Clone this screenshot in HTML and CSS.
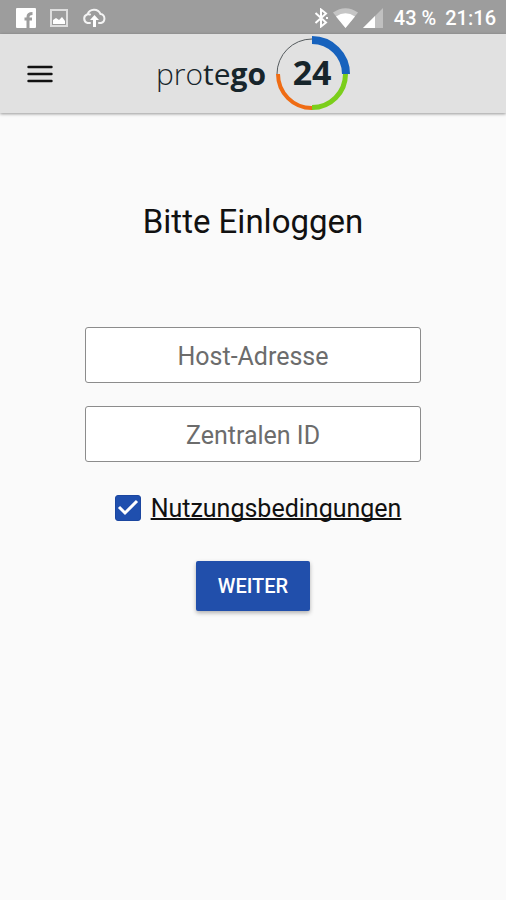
FILE: index.html
```html
<!DOCTYPE html>
<html lang="de">
<head>
<meta charset="utf-8">
<meta name="viewport" content="width=device-width, initial-scale=1">
<title>protego 24</title>
<link rel="stylesheet" href="styles.css">
</head>
<body>
<div class="status-bar">
  <div class="status-group status-notifications">
    <svg width="20" height="20" viewBox="0 0 20 20" aria-hidden="true"><rect width="20" height="20" rx="1" fill="#fff"/><path fill="none" stroke="#9d9d9d" stroke-width="3" d="M12 20V9Q12 5.500 16.500 5.500M8.500 11H16"/></svg>
    <svg width="18" height="18" viewBox="0 0 18 18" aria-hidden="true"><rect x="1" y="1" width="16" height="16" fill="none" stroke="#dedede" stroke-width="2"/><path fill="#fff" d="M3 15v-4l3-2 3 2 3-3 3 4v3z"/></svg>
    <svg width="25" height="20" viewBox="0 0 25 20" aria-hidden="true"><path fill="none" stroke="#f4f4f4" stroke-width="2" stroke-linecap="round" d="M8 15H5.500a4.500 4.500 0 0 1-.5-8.500Q6.500 6 8 6.500M5.500 6.500A7 7 0 0 1 18.500 6a4.600 4.600 0 0 1 .5 9h-2"/><path fill="#fff" d="M12.500 7 17 12h-3v7h-3v-7H8z"/></svg>
  </div>
  <div class="status-group">
    <svg width="14" height="20" viewBox="0 0 14 20" aria-hidden="true"><path fill="none" stroke="#fff" stroke-width="2" d="M1.500 5 12 14.500 7 18.500v-17L12 5.500 1.500 15"/><path fill="#fff" d="M12 9h2v2h-2z"/></svg>
    <svg width="25" height="20" viewBox="0 0 25 20" aria-hidden="true"><path fill="#c5c5c5" d="M0 4.500Q12.500-4 25 4.500L12.500 20z"/><path fill="#fff" d="M3 8.500Q12.500 2 22 8.500L12.500 20z"/></svg>
    <svg width="20" height="20" viewBox="0 0 20 20" aria-hidden="true"><path fill="#c0c0c0" d="M20 0v20H0z"/><path fill="#fff" d="M12 8v12H0z"/></svg>
    <span class="battery">43 %</span>
    <span>21:16</span>
  </div>
</div>
<header class="app-bar">
  <button class="menu-button" type="button" aria-label="Menü">
    <svg width="26" height="18" viewBox="0 0 26 18" aria-hidden="true"><path stroke="#111" stroke-width="2.400" stroke-linecap="round" d="M1.500 2h23M1.500 9h23M1.500 16h23"/></svg>
  </button>
  <div class="brand">
    <span class="brand-name"><span class="thin">pro</span><span class="medium">te</span><span class="bold">go</span></span>
    <div class="ring">
      <svg width="76" height="76" viewBox="0 0 76 76" fill="none" aria-hidden="true">
        <path stroke="#555b5e" d="M3 38A35 35 0 0 1 38 3"/>
        <path stroke="#ef6c14" stroke-width="4" d="M4 38A34 34 0 0 0 38 72"/>
        <path stroke="#7bce1b" stroke-width="5" d="M38 71.500A33.500 33.500 0 0 0 71.500 38"/>
        <path stroke="#1762bd" stroke-width="8" d="M38 4A34 34 0 0 1 72 38"/>
      </svg>
      <span class="ring-number">24</span>
    </div>
  </div>
</header>
<main class="login">
  <h1>Bitte Einloggen</h1>
  <form class="login-form">
    <input class="field" type="text" placeholder="Host-Adresse" aria-label="Host-Adresse">
    <input class="field" type="text" placeholder="Zentralen ID" aria-label="Zentralen ID">
    <div class="terms">
      <span class="check">
        <input type="checkbox" id="terms" aria-labelledby="terms-link" checked>
        <svg class="check-mark" width="26" height="26" viewBox="0 0 26 26" aria-hidden="true"><path fill="none" stroke="#fff" stroke-width="3" d="m4 12 6 6L22 6"/></svg>
      </span>
      <a id="terms-link" href="#terms">Nutzungsbedingungen</a>
    </div>
    <button class="submit" type="submit">WEITER</button>
  </form>
</main>
</body>
</html>
```
FILE: styles.css
```css
* {
  box-sizing: border-box;
}

body {
  margin: 0;
  min-height: 100vh;
  background: #fafafa;
  color: #111;
  font-family: Roboto, "Liberation Sans", sans-serif;
}

.status-bar {
  display: flex;
  align-items: center;
  justify-content: space-between;
  height: 34px;
  padding: 2px 10px 0 16px;
  background: #9d9d9d;
  color: #fff;
  font-size: 20px;
  font-weight: 500;
  line-height: 24px;
}

.status-group {
  display: flex;
  align-items: center;
  gap: 5px;
}

.status-notifications {
  gap: 14px;
}

.battery {
  margin: 0 4px 0 6px;
}

.app-bar {
  display: grid;
  grid-template-columns: 80px 1fr 80px;
  align-items: center;
  height: 79px;
  background: #e1e1e1;
  box-shadow: 0 1px 3px rgba(0, 0, 0, 0.4);
}

.menu-button {
  display: flex;
  justify-content: center;
  padding: 12px;
  border: 0;
  background: none;
}

.brand {
  display: flex;
  align-items: center;
  justify-content: center;
  gap: 8px;
  color: #17252b;
  font-family: "Open Sans", "Noto Sans", sans-serif;
}

.brand-name {
  font-size: 30px;
  line-height: 40px;
}

.thin {
  font-weight: 300;
}

.medium {
  font-weight: 400;
}

.bold {
  font-weight: 700;
}

.ring {
  display: grid;
  place-items: center;
}

.ring > * {
  grid-area: 1 / 1;
}

.ring-number {
  padding-bottom: 4px;
  font-size: 34px;
  font-weight: 700;
  line-height: 40px;
}

.login {
  display: flex;
  flex-direction: column;
  align-items: center;
  padding-top: 89px;
}

h1 {
  margin: 0;
  font-size: 33px;
  font-weight: 400;
  line-height: 40px;
}

.login-form {
  display: flex;
  flex-direction: column;
  align-items: center;
  width: 100%;
  padding-top: 85px;
}

.field {
  width: 66.6%;
  height: 56px;
  margin-bottom: 23px;
  padding: 2px 12px 0;
  border: 1px solid #8c8c8c;
  border-radius: 3px;
  background: #fff;
  color: #111;
  font: 400 25px Roboto, sans-serif;
  text-align: center;
}

.field::placeholder {
  color: #6c6c6c;
  opacity: 1;
}

.terms {
  display: flex;
  align-items: center;
  gap: 10px;
  margin-top: 6px;
  padding-left: 10px;
  font-size: 25px;
  line-height: 32px;
}

.terms a {
  padding-top: 2px;
  color: #111;
  text-decoration: underline;
  text-decoration-thickness: 2px;
  text-decoration-skip-ink: none;
}

.check {
  display: grid;
}

.check > * {
  grid-area: 1 / 1;
}

.check input {
  width: 26px;
  height: 26px;
  margin: 0;
  border: 1px solid #1b469f;
  border-radius: 3px;
  appearance: none;
}

.check input:checked {
  background: #1f4fae;
}

.check-mark {
  pointer-events: none;
  visibility: hidden;
}

.check input:checked + .check-mark {
  visibility: visible;
}

.submit {
  margin-top: 36px;
  padding: 13px 22px;
  border: 0;
  border-radius: 2px;
  background: #214fab;
  box-shadow: 0 2px 4px rgba(0, 0, 0, 0.3);
  color: #fff;
  font: 500 20px/24px Roboto, sans-serif;
}
```
